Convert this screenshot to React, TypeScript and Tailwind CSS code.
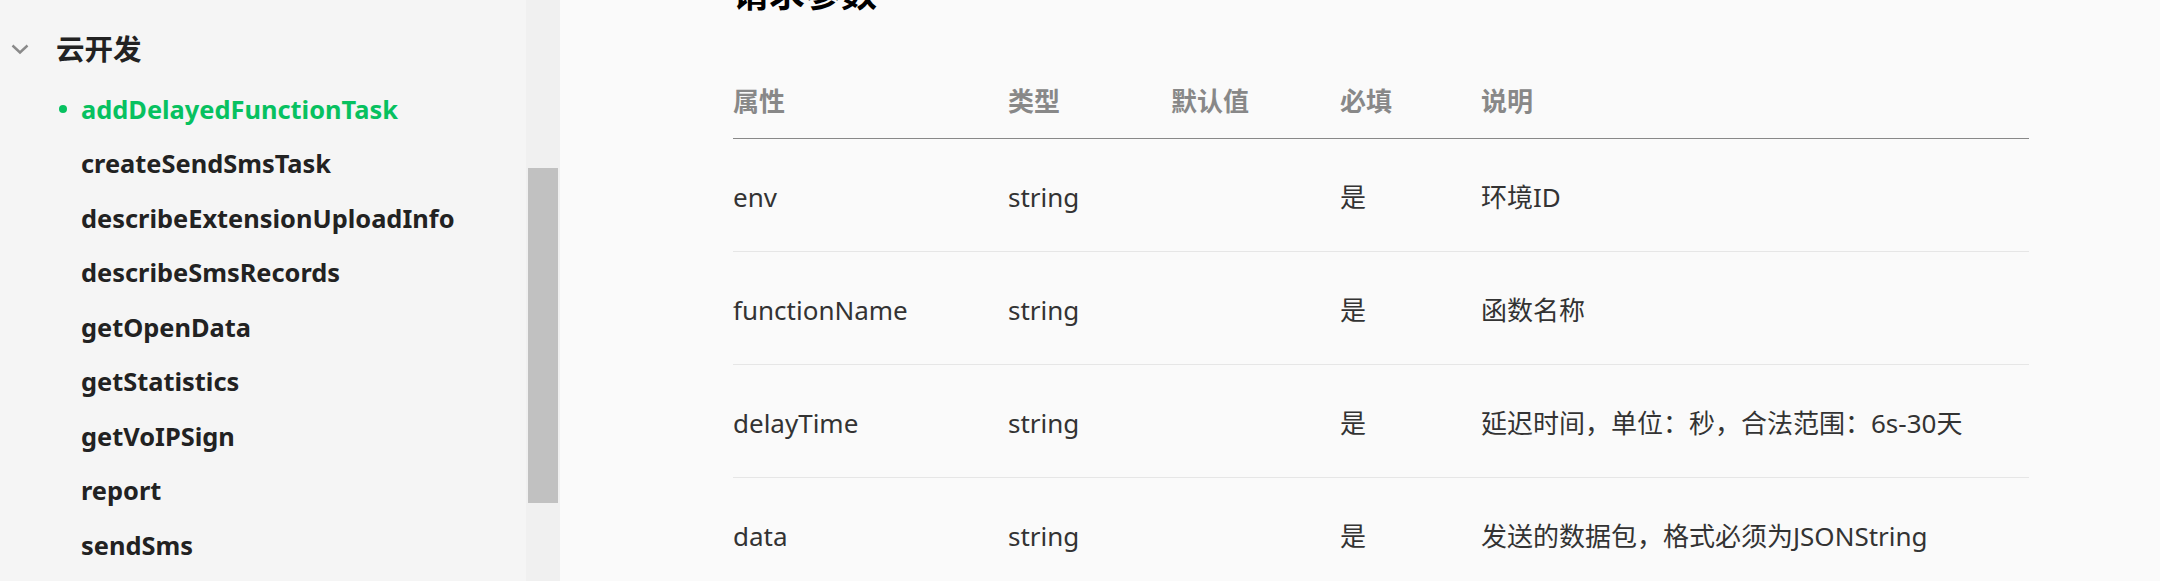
import React from 'react';

const navItems = [
  'addDelayedFunctionTask',
  'createSendSmsTask',
  'describeExtensionUploadInfo',
  'describeSmsRecords',
  'getOpenData',
  'getStatistics',
  'getVoIPSign',
  'report',
  'sendSms',
];

const params = [
  { name: 'env', type: 'string', def: '', required: '是', desc: '环境ID' },
  { name: 'functionName', type: 'string', def: '', required: '是', desc: '函数名称' },
  { name: 'delayTime', type: 'string', def: '', required: '是', desc: '延迟时间，单位：秒，合法范围：6s-30天' },
  { name: 'data', type: 'string', def: '', required: '是', desc: '发送的数据包，格式必须为JSONString' },
];

const font = { fontFamily: '"Noto Sans", "Noto Sans CJK SC", sans-serif' };

const Sidebar: React.FC = () => (
  <aside className="w-[560px] h-[581px] flex shrink-0 bg-[#f5f5f5]">
    <div className="flex-1 overflow-hidden">
      <div className="flex items-center h-[50px] mt-[24px]">
        <svg width="18" height="11" viewBox="0 0 18 11" className="ml-[11px]">
          <path d="M1.5 1.5 L9 8.5 L16.5 1.5" fill="none" stroke="#8a8a8a" strokeWidth="2.4" />
        </svg>
        <span className="ml-[27px] text-[28.5px] leading-none font-bold text-[#222]">云开发</span>
      </div>
      <ul className="mt-[8px]">
        {navItems.map((item, i) => (
          <li key={item} className="h-[54.5px] flex items-center relative">
            {i === 0 && (
              <span className="absolute left-[59px] w-[8px] h-[8px] rounded-full bg-[#07c160]" />
            )}
            <span
              className={
                'ml-[81px] text-[25.4px] leading-none font-bold ' +
                (i === 0 ? 'text-[#07c160]' : 'text-[#222]')
              }
            >
              {item}
            </span>
          </li>
        ))}
      </ul>
    </div>
    <div className="w-[34px] bg-[#f0f0f0] flex justify-center">
      <div className="w-[30px] h-[335px] mt-[168px] bg-[#c1c1c1]" />
    </div>
  </aside>
);

export default function App() {
  return (
    <div className="flex w-[2160px] h-[581px] overflow-hidden bg-[#fafafa]" style={font}>
      <Sidebar />
      <main className="flex-1 pl-[173px]">
        <h2 className="text-[36px] leading-[36px] font-bold text-black mt-[-24px]">请求参数</h2>
        <table className="w-[1296px] mt-[52px] border-collapse text-left">
          <thead>
            <tr className="h-[74px] border-b border-[#888]">
              <th className="w-[275px] pt-[2px] text-[26px] font-bold text-[#888]">属性</th>
              <th className="w-[163px] pt-[2px] text-[26px] font-bold text-[#888]">类型</th>
              <th className="w-[169px] pt-[2px] text-[26px] font-bold text-[#888]">默认值</th>
              <th className="w-[141px] pt-[2px] text-[26px] font-bold text-[#888]">必填</th>
              <th className="pt-[2px] text-[26px] font-bold text-[#888]">说明</th>
            </tr>
          </thead>
          <tbody>
            {params.map((p) => (
              <tr key={p.name} className="h-[113px] border-b border-[#e6e6e6] text-[26px] text-[#333]">
                <td className="pt-[5px]">{p.name}</td>
                <td className="pt-[5px]">{p.type}</td>
                <td className="pt-[5px]">{p.def}</td>
                <td className="pt-[5px]">{p.required}</td>
                <td className="pt-[5px]">{p.desc}</td>
              </tr>
            ))}
          </tbody>
        </table>
      </main>
    </div>
  );
}
